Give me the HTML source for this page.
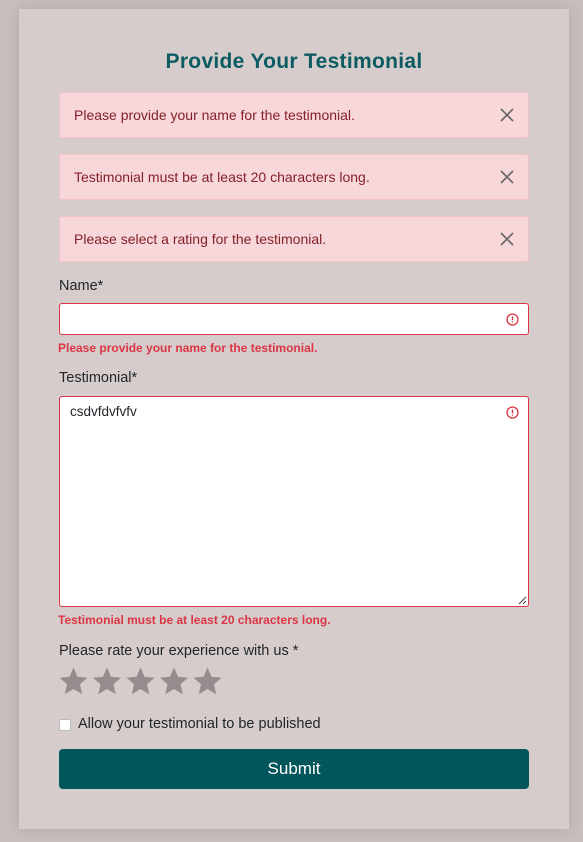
<!DOCTYPE html>
<html><head><style>
*{box-sizing:border-box;margin:0;padding:0}
body{width:583px;height:842px;background:#c8bebd;font-family:"Liberation Sans",sans-serif;position:relative;overflow:hidden}
.card{position:absolute;left:19px;top:9px;width:550px;height:820px;background:#d6cccb;box-shadow:0 0 14px rgba(0,0,0,.12)}
h1{position:absolute;left:0;width:100%;top:41px;text-align:center;font-family:"Liberation Sans",sans-serif;font-weight:bold;font-size:21px;color:#0c5a62;letter-spacing:.3px}
.al{position:absolute;left:40px;width:470px;height:46px;background:#f8d7da;border:1px solid #f4c2c7;border-radius:3px;color:#842029;font-size:14px;padding:14px 0 0 14px}
.al svg{position:absolute;right:14px;top:15px}
.t{position:absolute;left:40px;font-size:14.5px;color:#212529}
.er{position:absolute;left:39px;font-size:12px;font-weight:bold;color:#dc3545}
.in{position:absolute;left:40px;width:470px;background:#fff;border:1px solid #dc3545;border-radius:3px}
.ic{position:absolute;right:9px;top:9px}
.btn{position:absolute;left:40px;top:740px;width:470px;height:40px;background:#00565b;border-radius:4px;color:#fff;font-size:17px;text-align:center;line-height:40px}
</style></head><body>
<div class="card">
<h1>Provide Your Testimonial</h1>
<div class="al" style="top:83px">Please provide your name for the testimonial.<svg width="14" height="14"><path d="M1 1L13 13M13 1L1 13" stroke="#666" stroke-width="1.6"/></svg></div>
<div class="al" style="top:145px">Testimonial must be at least 20 characters long.<svg width="14" height="14"><path d="M1 1L13 13M13 1L1 13" stroke="#666" stroke-width="1.6"/></svg></div>
<div class="al" style="top:207px">Please select a rating for the testimonial.<svg width="14" height="14"><path d="M1 1L13 13M13 1L1 13" stroke="#666" stroke-width="1.6"/></svg></div>
<div class="t" style="top:269px">Name*</div>
<div class="in" style="top:294px;height:32px"><svg class="ic" width="13" height="13"><circle cx="6.5" cy="6.5" r="5.5" fill="none" stroke="#dc3545" stroke-width="1.3"/><path d="M6.5 3.5V7.2M6.5 8.5V9.6" stroke="#dc3545" stroke-width="1.4"/></svg></div>
<div class="er" style="top:332px">Please provide your name for the testimonial.</div>
<div class="t" style="top:361px">Testimonial*</div>
<div class="in" style="top:387px;height:211px"><div style="position:absolute;left:10px;top:7px;font-size:13.5px;color:#212529">csdvfdvfvfv</div><svg class="ic" width="13" height="13"><circle cx="6.5" cy="6.5" r="5.5" fill="none" stroke="#dc3545" stroke-width="1.3"/><path d="M6.5 3.5V7.2M6.5 8.5V9.6" stroke="#dc3545" stroke-width="1.4"/></svg><svg style="position:absolute;right:1px;bottom:1px" width="9" height="9"><path d="M8 1L1 8M8 5L5 8" stroke="#444" stroke-width="1"/></svg></div>
<div class="er" style="top:604px">Testimonial must be at least 20 characters long.</div>
<div class="t" style="top:634px">Please rate your experience with us *</div>
<svg style="position:absolute;left:40px;top:658px" width="170" height="32">
<g fill="#958d8d">
<path id="s" d="M14.5 0.5L18.5 9.8L28.5 10.7L21 17.3L23.2 27.2L14.5 22L5.8 27.2L8 17.3L0.5 10.7L10.5 9.8Z"/>
<use href="#s" x="33.5"/><use href="#s" x="67"/><use href="#s" x="100.5"/><use href="#s" x="134"/>
</g></svg>
<div style="position:absolute;left:40px;top:710px;width:12px;height:12px;background:#fff;border:1px solid #bbb;border-radius:2px"></div>
<div class="t" style="top:707px;left:59px">Allow your testimonial to be published</div>
<div class="btn">Submit</div>
</div>
</body></html>
